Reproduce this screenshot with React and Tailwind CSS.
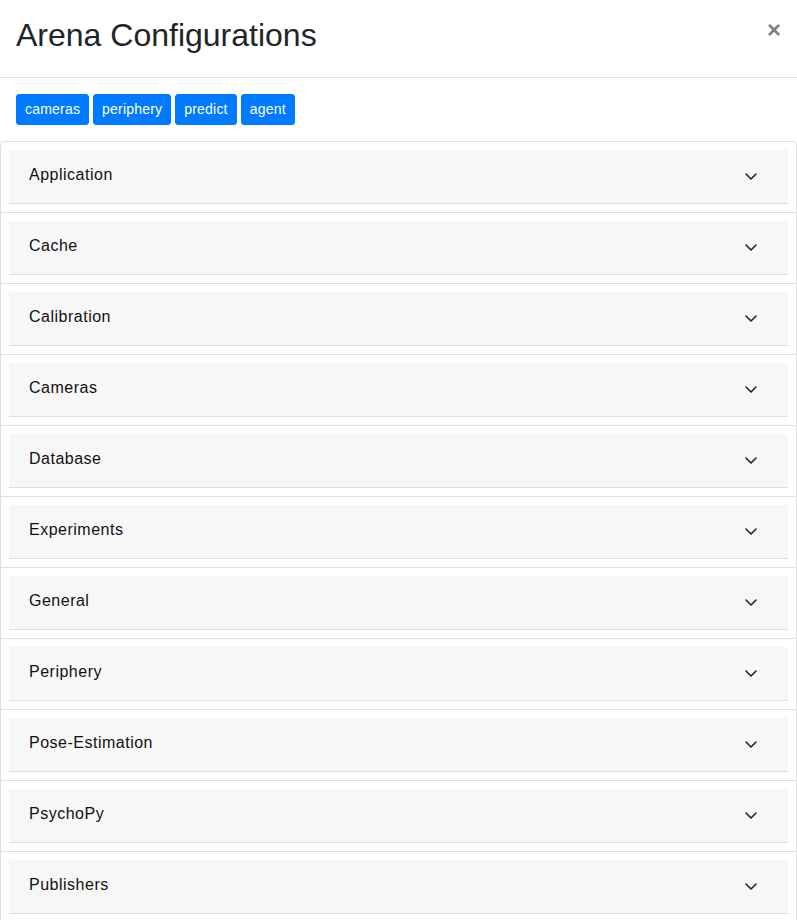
import React from "react";

const items = [
  "Application",
  "Cache",
  "Calibration",
  "Cameras",
  "Database",
  "Experiments",
  "General",
  "Periphery",
  "Pose-Estimation",
  "PsychoPy",
  "Publishers",
];

const tags = ["cameras", "periphery", "predict", "agent"];

function Chevron() {
  return (
    <svg width="12" height="7" viewBox="0 0 12 7" className="mt-[10px] shrink-0" fill="none">
      <path d="M1 1 L6 6 L11 1" stroke="#212529" strokeWidth="1.6" strokeLinecap="round" strokeLinejoin="round" />
    </svg>
  );
}

export default function App() {
  return (
    <div className="w-[797px] bg-white text-[#212529]" style={{ fontFamily: '"Liberation Sans", Arial, sans-serif' }}>
      <div className="flex items-start justify-between border-b border-[#dee2e6] px-4 pb-4 pt-4">
        <h2 className="mb-[7px] text-[32px] font-medium leading-[38px] text-[#212529]">Arena Configurations</h2>
        <span className="mr-0 mt-[2px] select-none text-[24px] font-bold leading-none text-black opacity-50">×</span>
      </div>
      <div className="flex gap-1 px-4 pt-4">
        {tags.map((t) => (
          <button
            key={t}
            className="rounded-[3px] border border-[#007bff] bg-[#007bff] px-2 py-1 text-[14px] leading-[21px] tracking-[0.2px] text-white"
          >
            {t}
          </button>
        ))}
      </div>
      <div className="mt-4 rounded-t-[4px] border border-[#dfdfdf]">
        {items.map((name) => (
          <div key={name} className="border-b border-[#dfdfdf] px-2 pb-2 pt-2">
            <div className="flex justify-between border-b border-[#dfdfdf] bg-[#f7f7f7] pb-[16px] pl-5 pr-[31px] pt-[13px]">
              <span className="text-[16px] leading-[24px] tracking-[0.5px] text-[#111]">{name}</span>
              <Chevron />
            </div>
          </div>
        ))}
      </div>
    </div>
  );
}
